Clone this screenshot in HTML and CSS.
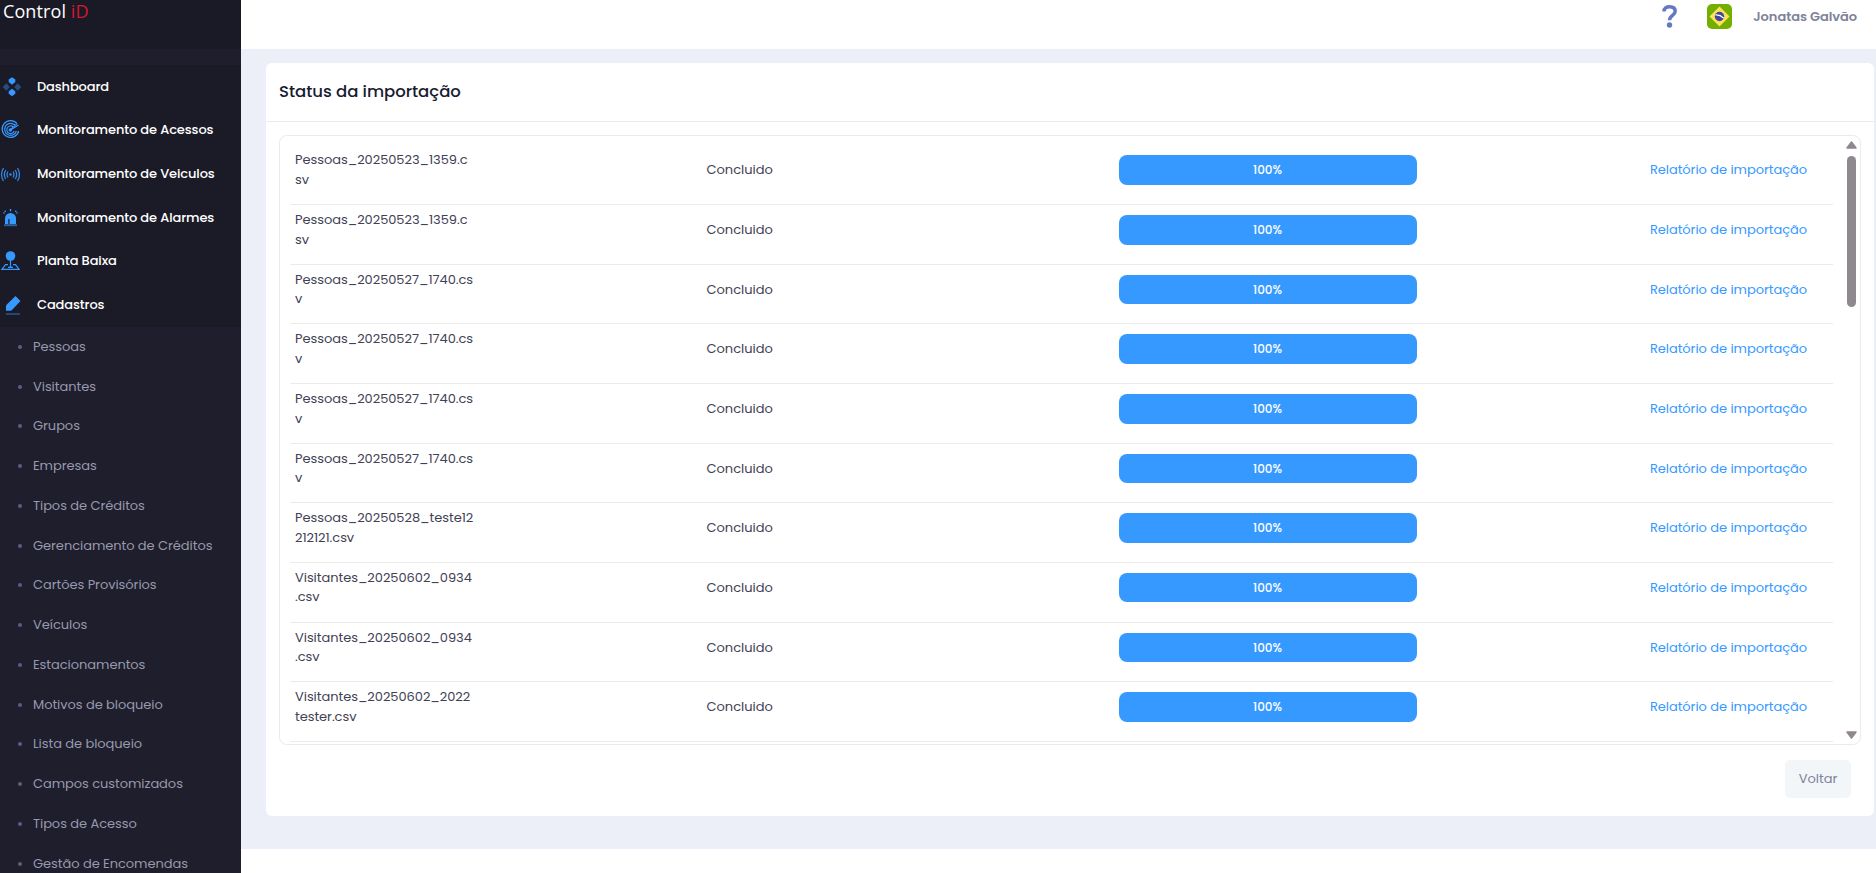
FILE: index.html
```html
<!DOCTYPE html>
<html lang="pt-BR">
<head>
<meta charset="UTF-8">
<meta name="viewport" content="width=device-width, initial-scale=1.0">
<title>Status da importação</title>
<link rel="stylesheet" href="styles.css">
</head>
<body>

<!-- Sidebar -->
<aside class="sidebar">
    <div class="brand">Control <span>iD</span></div>
    <ul class="menu">
        <li>
            <svg width="24" height="24" viewBox="0 0 24 24" fill="#3699ff"><path d="M12 2.300l3.300 2.300v2.500L12 9.700 8.700 7.100V4.600zM12 13.800l3.300 2.500v2.500L12 21.200l-3.300-2.400v-2.500z"/><path opacity=".4" d="M6.500 8.300l3.200 3.700-3.200 3.700L3 12.500v-1zM17.500 8.300l3.500 3.200v1l-3.500 3.200-3.200-3.700z"/></svg>
            <span>Dashboard</span>
        </li>
        <li>
            <svg width="24" height="24" viewBox="0 0 24 24" fill="none" stroke="#3699ff" stroke-width="1.200"><path d="M17 5.600A8.400 8.400 0 1 0 18.700 13M14.800 7A6 6 0 1 0 16.400 13M13 8.800A3.800 3.800 0 1 0 14.200 13M18.500 7l-8 5"/><path d="M17 5.600l-6.500 6"/><circle cx="10.300" cy="12" r="1.200" fill="#3699ff"/></svg>
            <span>Monitoramento de Acessos</span>
        </li>
        <li>
            <svg width="24" height="24" viewBox="0 0 24 24" fill="none" stroke="#3585dc" stroke-width="1.300"><circle cx="10.500" cy="12.500" r="1.300" fill="#3585dc" stroke="none"/><path d="M8 9.500q-2 3 0 6M13 9.500q2 3 0 6M5.800 8q-3 4.500 0 9M15.200 8q3 4.500 0 9M3.500 6q-4 6.500 0 13M17.500 6q4 6.500 0 13"/></svg>
            <span>Monitoramento de Veiculos</span>
        </li>
        <li>
            <svg width="24" height="24" viewBox="0 0 24 24" fill="#3699ff"><path d="M5 18v-5.500a5.500 5.500 0 0 1 11 0V18H9.500v-5h-1.200v5z"/><path d="M9.800 3h1.400v2.200H9.800zM5.200 4.300l1 1-1 1-1-1zM15.800 4.300l1 1-1 1-1-1z"/><circle cx="4" cy="7" r=".8"/><circle cx="17" cy="7" r=".8"/><path opacity=".55" d="M4 18.200h13v2H4z"/></svg>
            <span>Monitoramento de Alarmes</span>
        </li>
        <li>
            <svg width="24" height="24" viewBox="0 0 24 24"><circle cx="10.500" cy="7" r="4.800" fill="#3699ff"/><path d="M10.500 11v7M8 15.600H5.500l-3.600 4.800h17.200l-3.600-4.800H13M8 18.300h5" fill="none" stroke="#3699ff" stroke-width="1.200"/></svg>
            <span>Planta Baixa</span>
        </li>
        <li>
            <svg width="24" height="24" viewBox="0 0 24 24" fill="#3699ff"><path d="M15.500 3l5 5-8 8.500q-1 1.200-2.500 1.200H6v-4.200q0-1.200.8-2z"/><path opacity=".35" d="M6 20h14v2H6z"/></svg>
            <span>Cadastros</span>
        </li>
    </ul>
    <ul class="submenu">
        <li>Pessoas</li>
        <li>Visitantes</li>
        <li>Grupos</li>
        <li>Empresas</li>
        <li>Tipos de Créditos</li>
        <li>Gerenciamento de Créditos</li>
        <li>Cartões Provisórios</li>
        <li>Veículos</li>
        <li>Estacionamentos</li>
        <li>Motivos de bloqueio</li>
        <li>Lista de bloqueio</li>
        <li>Campos customizados</li>
        <li>Tipos de Acesso</li>
        <li>Gestão de Encomendas</li>
    </ul>
</aside>

<div class="wrapper">
    <!-- Topbar -->
    <header>
        <svg class="help" width="16" height="24" viewBox="0 0 16 24"><path d="M2 7.500C2 4.200 4.300 2.800 7.600 2.800c3.400 0 5.600 1.700 5.600 4.500 0 4.200-5.700 4-5.700 9" fill="none" stroke="#6478c4" stroke-width="3.500"/><circle cx="7.500" cy="21" r="2.700" fill="#6478c4"/></svg>
        <svg class="flag" width="25" height="25" viewBox="0 0 25 25"><rect width="25" height="25" rx="5" fill="#73af00"/><path d="M12.500 2.500l10 10-10 10-10-10z" fill="#ffe15a"/><circle cx="12.500" cy="12.500" r="4.700" fill="#41479b"/><path d="M8.300 11q4.500-.5 8.500 3.200" fill="none" stroke="#fff" stroke-width="1.200"/></svg>
        <span class="user">Jonatas Galvão</span>
    </header>

    <!-- Content -->
    <main>
        <section class="card">
            <div class="card-header"><h1>Status da importação</h1></div>
            <div class="list">
                <div class="rows">
                    <div class="row">
                        <div class="file">Pessoas_20250523_1359.c<br>sv</div>
                        <div class="status">Concluido</div>
                        <div class="progress">100%</div>
                        <a class="report">Relatório de importação</a>
                    </div>
                    <div class="row">
                        <div class="file">Pessoas_20250523_1359.c<br>sv</div>
                        <div class="status">Concluido</div>
                        <div class="progress">100%</div>
                        <a class="report">Relatório de importação</a>
                    </div>
                    <div class="row">
                        <div class="file">Pessoas_20250527_1740.cs<br>v</div>
                        <div class="status">Concluido</div>
                        <div class="progress">100%</div>
                        <a class="report">Relatório de importação</a>
                    </div>
                    <div class="row">
                        <div class="file">Pessoas_20250527_1740.cs<br>v</div>
                        <div class="status">Concluido</div>
                        <div class="progress">100%</div>
                        <a class="report">Relatório de importação</a>
                    </div>
                    <div class="row">
                        <div class="file">Pessoas_20250527_1740.cs<br>v</div>
                        <div class="status">Concluido</div>
                        <div class="progress">100%</div>
                        <a class="report">Relatório de importação</a>
                    </div>
                    <div class="row">
                        <div class="file">Pessoas_20250527_1740.cs<br>v</div>
                        <div class="status">Concluido</div>
                        <div class="progress">100%</div>
                        <a class="report">Relatório de importação</a>
                    </div>
                    <div class="row">
                        <div class="file">Pessoas_20250528_teste12<br>212121.csv</div>
                        <div class="status">Concluido</div>
                        <div class="progress">100%</div>
                        <a class="report">Relatório de importação</a>
                    </div>
                    <div class="row">
                        <div class="file">Visitantes_20250602_0934<br>.csv</div>
                        <div class="status">Concluido</div>
                        <div class="progress">100%</div>
                        <a class="report">Relatório de importação</a>
                    </div>
                    <div class="row">
                        <div class="file">Visitantes_20250602_0934<br>.csv</div>
                        <div class="status">Concluido</div>
                        <div class="progress">100%</div>
                        <a class="report">Relatório de importação</a>
                    </div>
                    <div class="row">
                        <div class="file">Visitantes_20250602_2022<br>tester.csv</div>
                        <div class="status">Concluido</div>
                        <div class="progress">100%</div>
                        <a class="report">Relatório de importação</a>
                    </div>
                </div>
                <div class="scrollbar">
                    <svg width="11" height="8" viewBox="0 0 11 8"><path d="M5.500 1L10 7H1z" fill="#8f888f" stroke="#8f888f" stroke-width="1.500" stroke-linejoin="round"/></svg>
                    <div class="thumb"></div>
                    <svg width="11" height="8" viewBox="0 0 11 8"><path d="M5.500 7L10 1H1z" fill="#8f888f" stroke="#8f888f" stroke-width="1.500" stroke-linejoin="round"/></svg>
                </div>
            </div>
            <div class="card-footer"><button>Voltar</button></div>
        </section>
    </main>
</div>

</body>
</html>
```
FILE: styles.css
```css
* {
    box-sizing: border-box;
}

body {
    font-family: 'Poppins', 'Inter', sans-serif;
    font-size: 13px;
    letter-spacing: -0.05px;
    margin: 0;
    height: 873px;
    display: flex;
    overflow: hidden;
    background-color: #fff;
    color: #3f4254;
}

ul {
    list-style: none;
    margin: 0;
    padding: 0;
}

/* Sidebar */
.sidebar {
    width: 241px;
    height: 873px;
    flex-shrink: 0;
    overflow: hidden;
    background: #1e1e2d;
}

.brand {
    height: 49px;
    padding-left: 3px;
    background: #1a1a27;
    color: #fff;
    font-family: 'Open Sans', sans-serif;
    font-size: 18px;
    line-height: 23px;
    letter-spacing: 0.1px;
}

.brand span {
    color: #d9152c;
    font-weight: 500;
}

.menu {
    margin-top: 16px;
    background: #1b1b28;
}

.menu li {
    display: flex;
    align-items: center;
    height: 43.67px;
    color: #fff;
    font-weight: 500;
    letter-spacing: -0.12px;
}

.menu svg {
    margin-right: 13px;
}

.submenu li {
    display: flex;
    align-items: center;
    height: 39.75px;
    padding-left: 18px;
    color: #9899ac;
}

.submenu li::before {
    content: "";
    width: 4px;
    height: 4px;
    margin-right: 11px;
    border-radius: 50%;
    background: #5c5e81;
}

/* Topbar */
.wrapper {
    flex: 1;
}

header {
    display: flex;
    align-items: flex-start;
    justify-content: flex-end;
    height: 49px;
    padding-right: 19px;
}

.help {
    margin: 4px 29px 0 0;
}

.flag {
    margin: 4px 21px 0 0;
}

.user {
    margin-top: 7px;
    line-height: 20px;
    font-weight: 600;
    color: #7e8299;
}

/* Card */
main {
    height: 800px;
    padding: 14px 2px 0 25px;
    background: #eceff8;
}

.card {
    height: 753px;
    border-radius: 6px;
    background: #fff;
}

.card-header {
    height: 59px;
    padding: 18px 13px 0;
    border-bottom: 1px solid #ebebeb;
}

h1 {
    margin: 0;
    font-size: 16.5px;
    line-height: 22px;
    letter-spacing: -0.03px;
    font-weight: 500;
    color: #181c32;
}

.list {
    display: flex;
    height: 610px;
    margin: 13px 13px 0;
    padding: 9.4px 3px 0 10px;
    border: 1px solid #ebebeb;
    border-radius: 8px;
    overflow: hidden;
}

.rows {
    flex: 1;
}

.row {
    display: grid;
    grid-template-columns: 411.5px 412.5px 298px 1fr;
    height: 59.67px;
    padding: 5px 26px 0 5px;
    border-bottom: 1px solid #ebebeb;
}

.file {
    line-height: 19.5px;
}

.status,
.report {
    line-height: 39px;
}

.status {
    letter-spacing: 0;
}

.report {
    text-align: right;
    color: #3699ff;
}

.progress {
    height: 29.5px;
    margin-top: 5px;
    padding-right: 1px;
    border-radius: 8px;
    background: #3699ff;
    color: #fff;
    font-size: 12px;
    font-weight: 500;
    line-height: 29px;
    letter-spacing: 0;
    text-align: center;
}

.scrollbar {
    display: flex;
    flex-direction: column;
    align-items: center;
    width: 11px;
    margin: -4px 0 5px 13px;
}

.thumb {
    width: 9px;
    height: 151px;
    margin: 7px 0 auto;
    border-radius: 5px;
    background: #8f888f;
}

.card-footer {
    display: flex;
    justify-content: flex-end;
    padding: 15px 23px 0;
}

button {
    width: 66px;
    height: 38px;
    padding: 0;
    border: none;
    border-radius: 5px;
    background: #f3f6f9;
    color: #7e8299;
    font: inherit;
    letter-spacing: 0;
}
```
